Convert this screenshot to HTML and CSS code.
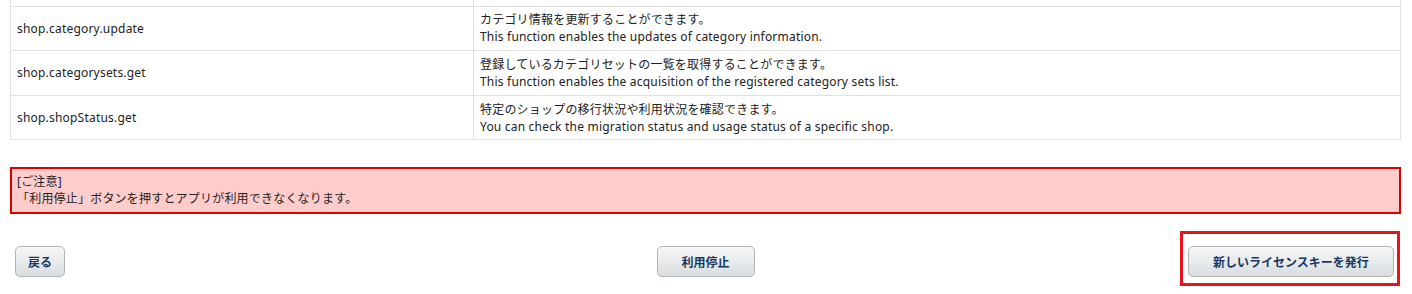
FILE: index.html
```html
<!DOCTYPE html>
<html lang="ja">
<head>
<meta charset="utf-8">
<title>API</title>
<link rel="stylesheet" href="styles.css">
</head>
<body>
<div class="page">
  <div class="scroll">
    <table class="api-table">
      <colgroup><col class="col-name"><col class="col-desc"></colgroup>
      <tbody>
        <tr class="row-prev">
          <td class="name"></td>
          <td class="desc"></td>
        </tr>
        <tr>
          <td class="name">shop.category.update</td>
          <td class="desc">カテゴリ情報を更新することができます。<br>This function enables the updates of category information.</td>
        </tr>
        <tr>
          <td class="name">shop.categorysets.get</td>
          <td class="desc">登録しているカテゴリセットの一覧を取得することができます。<br>This function enables the acquisition of the registered category sets list.</td>
        </tr>
        <tr>
          <td class="name">shop.shopStatus.get</td>
          <td class="desc">特定のショップの移行状況や利用状況を確認できます。<br>You can check the migration status and usage status of a specific shop.</td>
        </tr>
      </tbody>
    </table>
  </div>

  <div class="notice">
    [ご注意]<br>
    「利用停止」ボタンを押すとアプリが利用できなくなります。
  </div>

  <div class="actions">
    <div class="act-left"><button class="btn btn-back">戻る</button></div>
    <div class="act-center"><button class="btn btn-stop">利用停止</button></div>
    <div class="act-right">
      <div class="highlight"><button class="btn btn-issue">新しいライセンスキーを発行</button></div>
    </div>
  </div>
</div>
</body>
</html>
```

FILE: styles.css
```css
html, body {
  margin: 0;
  padding: 0;
  background: #ffffff;
}

body {
  font-family: "Noto Sans", "Noto Sans CJK JP", sans-serif;
  font-size: 12px;
  line-height: 17px;
  letter-spacing: 0.2px;
  color: #222222;
}

.page {
  width: 1391px;
  padding: 0 11px 0 10px;
  overflow: hidden;
}

.scroll {
  margin-top: -39px;
}

.api-table {
  width: 1391px;
  border-collapse: collapse;
  table-layout: fixed;
}

.col-name { width: 463px; }

.api-table td {
  border: 1px solid #e0e0e0;
  padding: 4.8px 6px;
  vertical-align: middle;
  height: 34px;
}

.notice {
  margin-top: 27px;
  border: 2px solid #dd0000;
  background: #ffcccc;
  padding: 4px 5px 5px;
  color: #222222;
}

.actions {
  display: grid;
  grid-template-columns: 1fr auto 1fr;
  align-items: start;
  margin-top: 17px;
}

.act-left {
  justify-self: start;
  margin-top: 15px;
  margin-left: 5px;
}

.act-center {
  margin-top: 15px;
}

.act-right {
  justify-self: end;
  margin-right: 1px;
}

.highlight {
  border: 3px solid #e8141c;
  padding: 12px 3px 6px 5px;
}

.btn {
  display: block;
  box-sizing: border-box;
  height: 31px;
  padding: 0;
  border: 1px solid #b4b4b4;
  border-radius: 5px;
  background: linear-gradient(to bottom, #f5f6f7 0%, #e9ebed 50%, #d9dde0 100%);
  font-family: "Noto Sans CJK JP", sans-serif;
  font-size: 12px;
  font-weight: bold;
  letter-spacing: 0;
  color: #17395f;
  text-align: center;
  cursor: pointer;
}

.btn-back { width: 50px; }
.btn-stop { width: 98px; }
.btn-issue { width: 206px; }
```
